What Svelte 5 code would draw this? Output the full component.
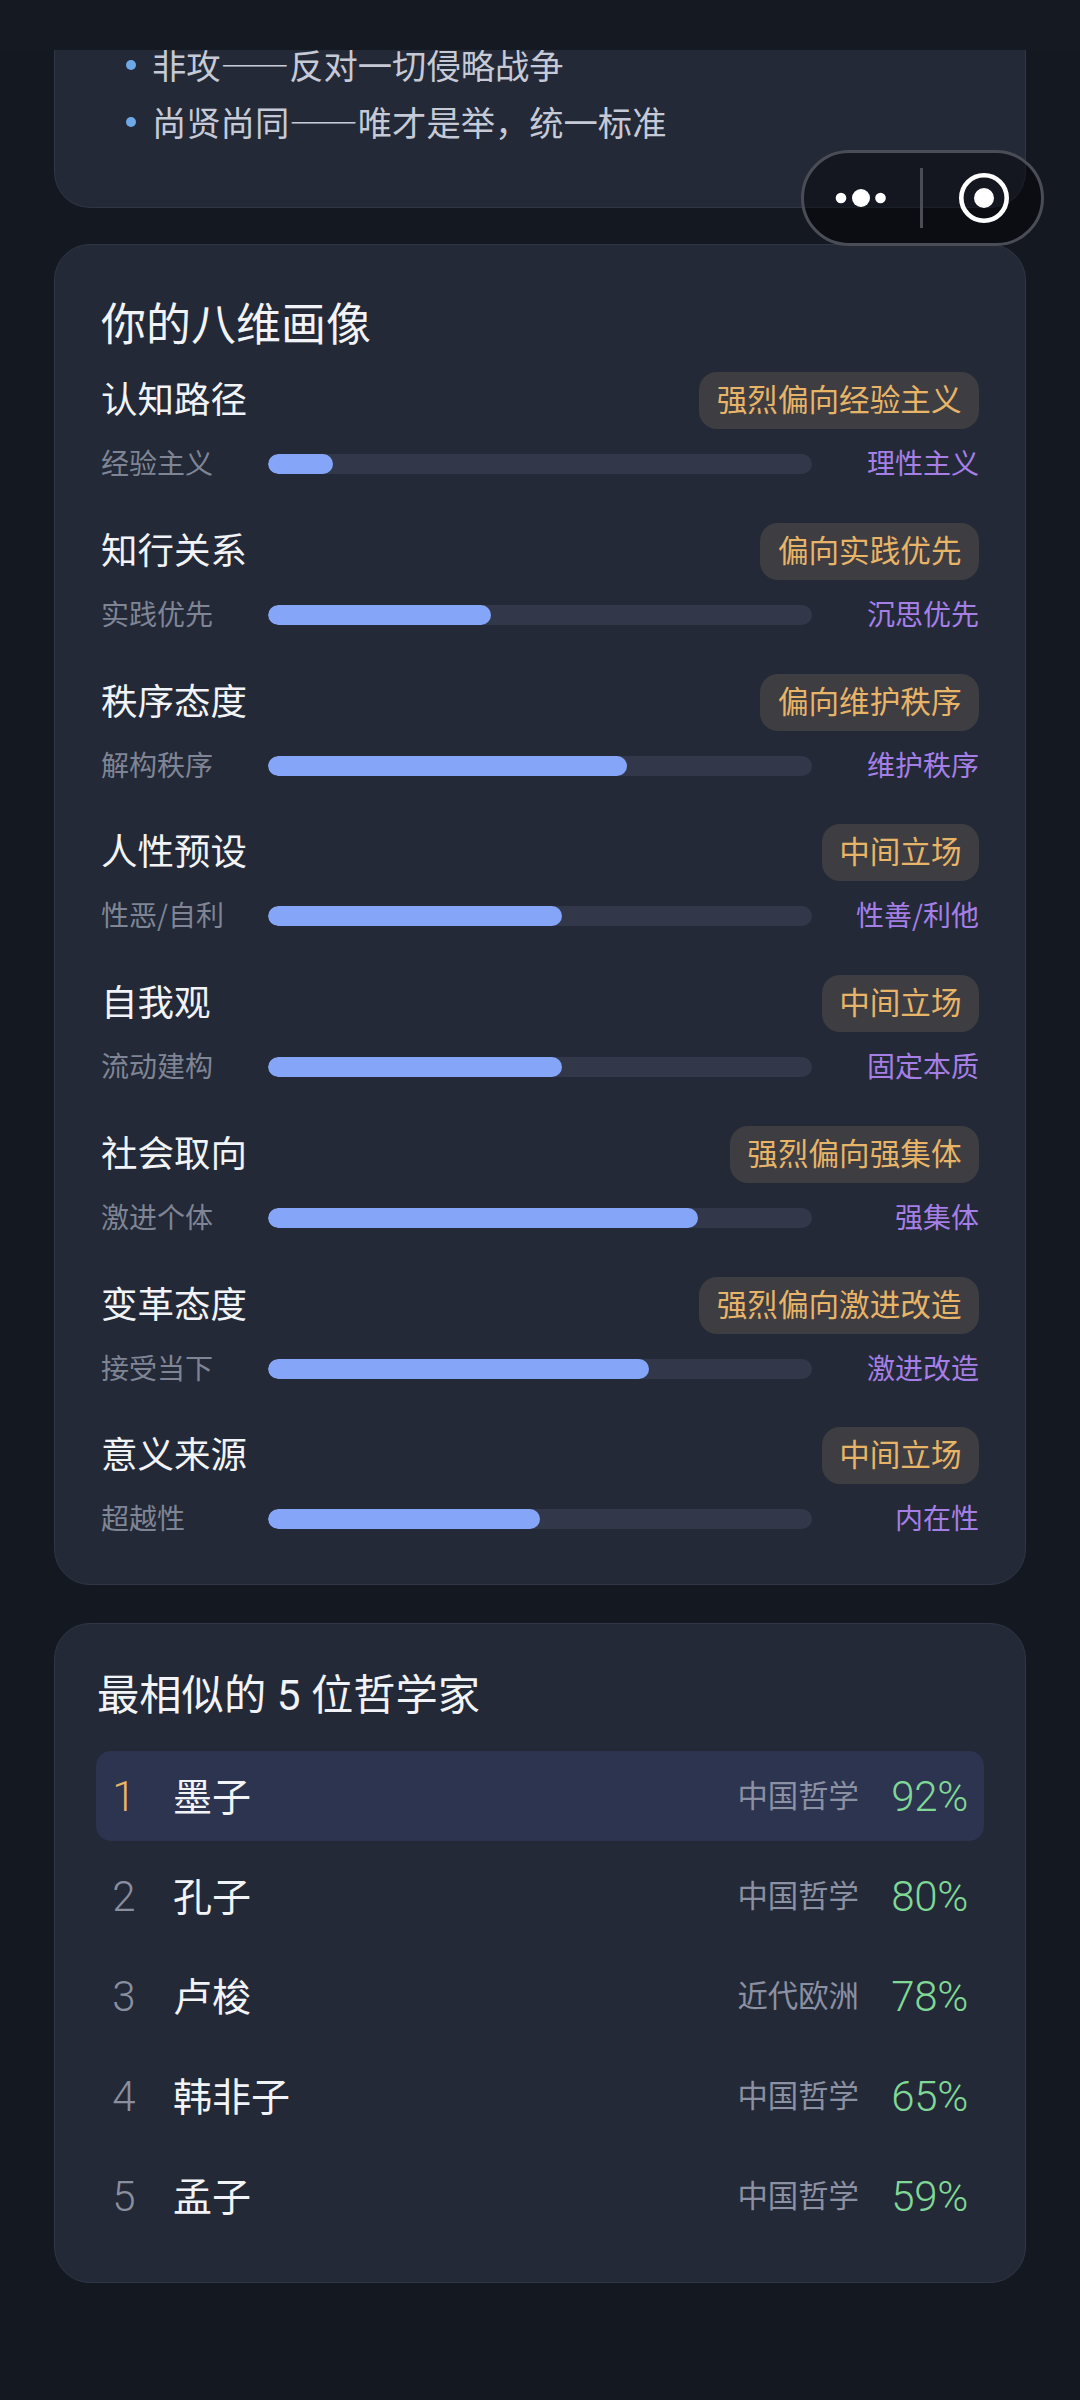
<script>
	const doctrines = ['非攻——反对一切侵略战争', '尚贤尚同——唯才是举，统一标准'];

	const dimensions = [
		{ name: '认知路径', tag: '强烈偏向经验主义', left: '经验主义', right: '理性主义', value: 12 },
		{ name: '知行关系', tag: '偏向实践优先', left: '实践优先', right: '沉思优先', value: 41 },
		{ name: '秩序态度', tag: '偏向维护秩序', left: '解构秩序', right: '维护秩序', value: 66 },
		{ name: '人性预设', tag: '中间立场', left: '性恶/自利', right: '性善/利他', value: 54 },
		{ name: '自我观', tag: '中间立场', left: '流动建构', right: '固定本质', value: 54 },
		{ name: '社会取向', tag: '强烈偏向强集体', left: '激进个体', right: '强集体', value: 79 },
		{ name: '变革态度', tag: '强烈偏向激进改造', left: '接受当下', right: '激进改造', value: 70 },
		{ name: '意义来源', tag: '中间立场', left: '超越性', right: '内在性', value: 50 }
	];

	const matches = [
		{ name: '墨子', school: '中国哲学', score: 92 },
		{ name: '孔子', school: '中国哲学', score: 80 },
		{ name: '卢梭', school: '近代欧洲', score: 78 },
		{ name: '韩非子', school: '中国哲学', score: 65 },
		{ name: '孟子', school: '中国哲学', score: 59 }
	];
</script>

<div class="page" lang="zh-CN">
	<div class="topbar"></div>

	<section class="card intro">
		<ul class="doctrines">
			{#each doctrines as line}
				<li>{line}</li>
			{/each}
		</ul>
	</section>

	<section class="card profile">
		<h2>你的八维画像</h2>
		<div class="dims">
			{#each dimensions as d}
				<div class="dim">
					<div class="dim-head">
						<span class="dim-name">{d.name}</span>
						<span class="tag">{d.tag}</span>
					</div>
					<div class="dim-bar">
						<span class="pole-left">{d.left}</span>
						<div class="track">
							<div class="fill" style="width: {d.value}%"></div>
						</div>
						<span class="pole-right">{d.right}</span>
					</div>
				</div>
			{/each}
		</div>
	</section>

	<section class="card similar">
		<h2>最相似的 5 位哲学家</h2>
		<ol class="matches">
			{#each matches as m, i}
				<li class="match" class:top={i === 0}>
					<span class="rank">{i + 1}</span>
					<span class="match-name">{m.name}</span>
					<span class="school">{m.school}</span>
					<span class="score">{m.score}%</span>
				</li>
			{/each}
		</ol>
	</section>

	<div class="capsule" aria-hidden="true">
		<svg class="more" viewBox="0 0 56 20" width="56" height="20">
			<circle cx="8" cy="10" r="5.3" />
			<circle cx="28" cy="10" r="9" />
			<circle cx="47.5" cy="10" r="5.3" />
		</svg>
		<span class="divider"></span>
		<svg class="target" viewBox="0 0 52 52" width="52" height="52">
			<circle cx="26" cy="26" r="22.7" fill="none" stroke="#fff" stroke-width="4.6" />
			<circle cx="26" cy="26" r="10" fill="#fff" />
		</svg>
	</div>
</div>

<style>
	:global(body) {
		background: #141821;
	}

	.page {
		position: relative;
		height: 2400px;
		overflow: hidden;
		box-sizing: border-box;
		padding: 0 54px;
		background: #141821;
		font-family: 'Noto Sans CJK SC', 'Noto Sans', sans-serif;
		color: #f1f3f7;
	}

	.topbar {
		height: 50px;
		margin: 0 -54px;
		background: #151922;
	}

	.card {
		box-sizing: border-box;
		background: #232937;
		border: 1.5px solid #2f3645;
		border-radius: 36px;
	}

	h2 {
		margin: 0;
		font-size: 45px;
		font-weight: 400;
		line-height: 60px;
	}

	.intro {
		height: 158px;
		border-top: none;
		border-radius: 0 0 36px 36px;
		overflow: hidden;
		margin-bottom: 36px;
	}

	.doctrines {
		list-style: none;
		margin: -14px 0 0;
		padding: 0 0 0 71px;
	}

	.doctrines li {
		position: relative;
		padding-left: 26px;
		font-size: 34.3px;
		font-variant-east-asian: full-width;
		line-height: 56.5px;
		color: #c6cad6;
	}

	.doctrines li::before {
		content: '';
		position: absolute;
		left: 0;
		top: 24px;
		width: 10px;
		height: 10px;
		border-radius: 50%;
		background: #6ea8e6;
	}

	.profile {
		height: 1341px;
		padding: 47px 46px 0 46px;
		margin-bottom: 38px;
	}

	.profile h2 {
		margin-bottom: 20px;
	}

	.dims {
		display: flex;
		flex-direction: column;
		gap: 38.75px;
	}

	.dim-head {
		display: flex;
		justify-content: space-between;
		align-items: center;
		height: 57px;
	}

	.dim-name {
		padding-bottom: 6px;
		font-size: 36.5px;
	}

	.tag {
		padding: 0 17.5px;
		height: 57px;
		line-height: 53px;
		border-radius: 18px;
		background: #3e3d41;
		color: #e8b468;
		font-size: 30.6px;
	}

	.dim-bar {
		display: grid;
		grid-template-columns: 167px 1fr 167px;
		align-items: center;
		height: 40px;
		margin-top: 15px;
	}

	.pole-left,
	.pole-right {
		padding-bottom: 3px;
		font-size: 28px;
		line-height: 37px;
		white-space: nowrap;
	}

	.pole-left {
		color: #7f8595;
	}

	.pole-right {
		text-align: right;
		color: #a57fe6;
	}

	.track {
		height: 20px;
		border-radius: 10px;
		background: #323849;
		overflow: hidden;
	}

	.fill {
		height: 100%;
		border-radius: 10px;
		background: #84a5f8;
	}

	.similar {
		height: 660px;
		padding: 42px 41px 0 41px;
	}

	.similar h2 {
		margin-bottom: 25px;
		padding-left: 1px;
		font-family: Roboto, 'Noto Sans CJK SC', sans-serif;
		font-size: 42.3px;
	}

	.matches {
		list-style: none;
		margin: 0;
		padding: 0;
		display: flex;
		flex-direction: column;
		gap: 10px;
	}

	.match {
		display: flex;
		align-items: center;
		height: 90px;
		padding: 0 16px 0 14px;
		border-radius: 15px;
	}

	.match.top {
		background: #2c3450;
	}

	.rank {
		width: 28px;
		margin-right: 35px;
		text-align: center;
		font-family: Roboto, sans-serif;
		font-size: 42px;
		font-weight: 300;
		color: #8a8fa0;
	}

	.top .rank {
		color: #e8b468;
	}

	.match-name {
		flex: 1;
		padding-bottom: 5px;
		font-size: 39px;
	}

	.school {
		padding-bottom: 5px;
		font-size: 30.4px;
		color: #8b90a3;
	}

	.score {
		width: 80px;
		margin-left: 29px;
		text-align: right;
		font-family: Roboto, sans-serif;
		font-size: 42px;
		font-weight: 300;
		letter-spacing: -0.3px;
		color: #80d896;
	}

	.capsule {
		position: absolute;
		left: 801px;
		top: 150px;
		box-sizing: border-box;
		width: 243px;
		height: 96px;
		display: flex;
		align-items: center;
		padding-left: 29px;
		border: 3.5px solid #4a4d55;
		border-radius: 48px;
		background: rgba(0, 0, 0, 0.42);
	}

	.more {
		fill: #fff;
		flex-shrink: 0;
	}

	.divider {
		width: 3px;
		height: 60px;
		margin-left: 31px;
		background: #4a4d55;
		flex-shrink: 0;
	}

	.target {
		margin-left: 34.5px;
		flex-shrink: 0;
	}
</style>
